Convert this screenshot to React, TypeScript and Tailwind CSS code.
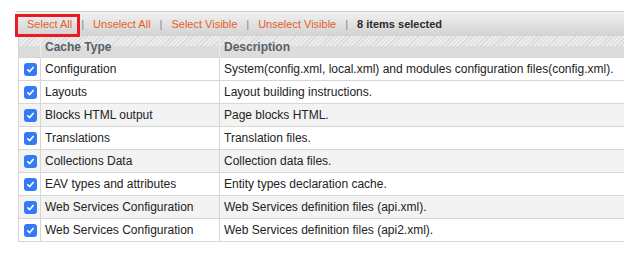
import React from "react";

const rows: [string, string][] = [
  ["Configuration", "System(config.xml, local.xml) and modules configuration files(config.xml)."],
  ["Layouts", "Layout building instructions."],
  ["Blocks HTML output", "Page blocks HTML."],
  ["Translations", "Translation files."],
  ["Collections Data", "Collection data files."],
  ["EAV types and attributes", "Entity types declaration cache."],
  ["Web Services Configuration", "Web Services definition files (api.xml)."],
  ["Web Services Configuration", "Web Services definition files (api2.xml)."],
];

function Check() {
  return (
    <span className="flex h-[13px] w-[13px] items-center justify-center rounded-[3px] bg-[#3479f6]">
      <svg width="9" height="9" viewBox="0 0 9 9" fill="none">
        <path d="M1.8 4.8 L3.7 6.6 L7.2 2.4" stroke="white" strokeWidth="1.6" strokeLinecap="round" strokeLinejoin="round" />
      </svg>
    </span>
  );
}

function Sep() {
  return <span className="mx-[9px] text-[#7a8797]">|</span>;
}

export default function App() {
  return (
    <div className="h-[255px] w-[624px] overflow-hidden bg-white pl-[16px] pt-[11px] font-['Liberation_Sans',Arial,sans-serif]">
      <div className="relative flex h-[25px] items-center border-t border-[#cfcfcf] bg-[linear-gradient(to_bottom,#f1f1f1,#d2d2d2)] pl-[11px] text-[11px] text-[#e5601d]">
        <span className="absolute left-[-1px] top-[2px] h-[23px] w-[65px] border-[3px] border-[#ea1b22]" />
        <span>Select All</span>
        <Sep />
        <span>Unselect All</span>
        <Sep />
        <span>Select Visible</span>
        <Sep />
        <span>Unselect Visible</span>
        <Sep />
        <span className="font-bold text-[#2b2b2b]">8 items selected</span>
      </div>
      <div className="ml-[2px] border-l border-[#d6d6d6] text-[12px] text-[#222]">
        <div className="grid h-[22px] grid-cols-[22px_179px_1fr] border-b border-[#d6d6d6] [background:linear-gradient(to_bottom,transparent_50%,#dcdcdc_50%),repeating-linear-gradient(135deg,#d9d9d9_0,#d9d9d9_1px,#ececec_1px,#ececec_3px)]">
          <div className="border-r border-[#ececec]" />
          <div className="flex items-center border-r border-[#ececec] pl-[4px] font-bold text-[#56616b]">Cache Type</div>
          <div className="flex items-center pl-[4px] font-bold text-[#56616b]">Description</div>
        </div>
        {rows.map(([a, b], i) => (
          <div
            key={i}
            className={`grid h-[23px] grid-cols-[22px_179px_1fr] border-b border-[#d6d6d6] ${i % 2 === 0 && i !== 0 ? "bg-[#f3f3f3]" : "bg-white"}`}
          >
            <div className="flex items-center justify-center border-r border-[#d6d6d6] pl-[1px]">
              <Check />
            </div>
            <div className="flex items-center border-r border-[#d6d6d6] pl-[4px] whitespace-nowrap">{a}</div>
            <div className="flex items-center pl-[4px] whitespace-nowrap">{b}</div>
          </div>
        ))}
      </div>
    </div>
  );
}
